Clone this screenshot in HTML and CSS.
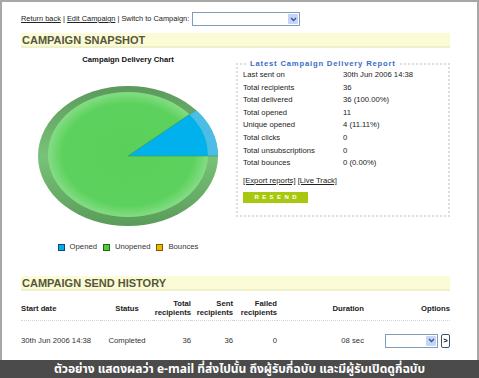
FILE: index.html
```html
<!DOCTYPE html>
<html lang="en">
<head>
    <meta charset="UTF-8">
    <meta name="viewport" content="width=device-width, initial-scale=1.0">
    <title>Campaign Snapshot</title>
    <link rel="stylesheet" href="styles.css">
</head>
<body>

    <div class="shot">
        <div class="page">
            <div class="topbar">
                <a href="#">Return back</a> | <a href="#">Edit Campaign</a> | Switch to Campaign:
                <span class="select select-wide"><span class="select-btn"><svg width="7" height="5" viewBox="0 0 7 5"><path d="M1 1 L3.5 3.5 L6 1" fill="none" stroke="#3d5586" stroke-width="1.4"/></svg></span></span>
            </div>

            <h2 class="section-head">CAMPAIGN SNAPSHOT</h2>
            <div class="snapshot">
                <div class="chart">
                    <div class="chart-title">Campaign Delivery Chart</div>
                    <svg width="214" height="176" viewBox="0 0 214 176">
                        <defs>
                            <linearGradient id="ring" x1="0" y1="0" x2="0" y2="1">
                                <stop offset="0" stop-color="#5c995c"/>
                                <stop offset="0.5" stop-color="#79c279"/>
                                <stop offset="1" stop-color="#5a9c5a"/>
                            </linearGradient>
                            <radialGradient id="face" cx="50%" cy="50%" r="50%">
                                <stop offset="0" stop-color="#5ad05a"/>
                                <stop offset="0.82" stop-color="#5dd15d"/>
                                <stop offset="1" stop-color="#84dd84"/>
                            </radialGradient>
                            <clipPath id="inner">
                                <ellipse cx="107" cy="89.5" rx="80" ry="62.5"/>
                            </clipPath>
                        </defs>
                        <ellipse cx="107" cy="91" rx="90" ry="70" fill="url(#ring)"/>
                        <path d="M107 91 L175 45 A90 70 0 0 1 197 91 Z" fill="#4bbde6"/>
                        <ellipse cx="107" cy="89.5" rx="80" ry="62.5" fill="url(#face)"/>
                        <path d="M107 91 L175 45 A90 70 0 0 1 197 91 Z" fill="#00b1ee" clip-path="url(#inner)"/>
                        <path d="M175 45 L107 91 L197 91" fill="none" stroke="#3f9b3f" stroke-width="0.6"/>
                    </svg>
                    <div class="legend">
                        <span class="legend-item"><i class="swatch opened"></i>Opened</span>
                        <span class="legend-item"><i class="swatch unopened"></i>Unopened</span>
                        <span class="legend-item"><i class="swatch bounces"></i>Bounces</span>
                    </div>
                </div>

                <fieldset class="report">
                    <legend>Latest Campaign Delivery Report</legend>
                    <table class="stats">
                        <tr><td>Last sent on</td><td>30th Jun 2006 14:38</td></tr>
                        <tr><td>Total recipients</td><td>36</td></tr>
                        <tr><td>Total delivered</td><td>36 (100.00%)</td></tr>
                        <tr><td>Total opened</td><td>11</td></tr>
                        <tr><td>Unique opened</td><td>4 (11.11%)</td></tr>
                        <tr><td>Total clicks</td><td>0</td></tr>
                        <tr><td>Total unsubscriptions</td><td>0</td></tr>
                        <tr><td>Total bounces</td><td>0 (0.00%)</td></tr>
                    </table>
                    <div class="report-links"><a href="#">[Export reports]</a> <a href="#">[Live Track]</a></div>
                    <button class="resend">RESEND</button>
                </fieldset>
            </div>

            <h2 class="section-head history-head">CAMPAIGN SEND HISTORY</h2>
            <table class="history">
                <colgroup>
                    <col style="width:80px"><col style="width:52px"><col style="width:38px"><col style="width:42px"><col style="width:44px"><col style="width:87px"><col style="width:86px">
                </colgroup>
                <thead>
                    <tr>
                        <th class="left">Start date</th>
                        <th class="mid">Status</th>
                        <th>Total<br>recipients</th>
                        <th>Sent<br>recipients</th>
                        <th>Failed<br>recipients</th>
                        <th>Duration</th>
                        <th>Options</th>
                    </tr>
                </thead>
                <tbody>
                    <tr>
                        <td class="left">30th Jun 2006 14:38</td>
                        <td class="mid">Completed</td>
                        <td>36</td>
                        <td>36</td>
                        <td>0</td>
                        <td>08 sec</td>
                        <td>
                            <div class="options">
                                <span class="select select-small"><span class="select-btn"><svg width="7" height="5" viewBox="0 0 7 5"><path d="M1 1 L3.5 3.5 L6 1" fill="none" stroke="#3d5586" stroke-width="1.4"/></svg></span></span>
                                <span class="go">&gt;</span>
                            </div>
                        </td>
                    </tr>
                </tbody>
            </table>
        </div>
        <div class="caption">ตัวอย่าง แสดงผลว่า e-mail ที่ส่งไปนั้น ถึงผู้รับกี่ฉบับ และมีผู้รับเปิดดูกี่ฉบับ</div>
    </div>

</body>
</html>
```

FILE: styles.css
```css
body { margin: 0; background: #fff; font-family: "Liberation Sans", Arial, sans-serif; font-size: 7.7px; color: #222; }
.shot { width: 479px; height: 378px; display: flex; flex-direction: column; }
.page { flex: 1; border: 2px solid #a7a7a7; border-bottom: 0; padding: 10px 27px 0 19px; }

/* top links */
.topbar { height: 14px; line-height: 14px; white-space: nowrap; font-size: 7.4px; }
.topbar a, .report-links a { color: #222; text-decoration: underline; }
.select { display: inline-flex; justify-content: flex-end; vertical-align: middle; box-sizing: border-box; height: 14px; padding: 1px; border: 1px solid #7f9db9; background: #fff; }
.select-wide { width: 108px; margin-left: 1px; }
.select-small { width: 53px; }
.select-btn { width: 10px; display: flex; align-items: center; justify-content: center; background: #c4d4fa; border-radius: 1px; }
.select-btn svg { display: block; }

.section-head { margin: 7px 0 0; height: 13px; line-height: 14px; padding-left: 1px; background: #fbfbd6; border-bottom: 2px solid #efefc9; font-size: 11px; font-weight: bold; color: #56563b; }
.history-head { margin-top: 24px; }

/* snapshot */
.snapshot { display: flex; align-items: flex-start; }
.chart { width: 214px; flex: none; text-align: center; }
.chart-title { margin-top: 7px; line-height: 10px; font-weight: bold; color: #111; }
.chart svg { display: block; }
.legend { display: flex; justify-content: center; gap: 6px; margin-top: 1px; line-height: 10px; color: #333; }
.legend-item { display: inline-flex; align-items: center; gap: 5px; }
.swatch { display: block; width: 5px; height: 5px; border: 1px solid; }
.swatch.opened { background: #0aa8ea; border-color: #05507a; }
.swatch.unopened { background: #4ccc3c; border-color: #22661c; }
.swatch.bounces { background: #f2b600; border-color: #7a5a00; }

.report { width: 214px; box-sizing: border-box; min-width: 0; margin: 11px 0 0 1px; padding: 0 5px 12px; border: 2px dotted #dedede; }
.report legend { margin-left: 5px; padding: 0 2px; line-height: 10px; font-weight: bold; color: #3b6cc8; letter-spacing: 0.8px; }
.stats { border-collapse: collapse; margin-top: 0; }
.stats td { padding: 0; height: 12.6px; line-height: 12.6px; }
.stats td:first-child { width: 100px; }
.report-links { margin-top: 6px; line-height: 10px; }
.resend { display: block; margin-top: 6px; width: 65px; height: 11px; padding: 0 0 0 3.4px; border: 0; background: #a7c80e; color: #fff; font-family: inherit; font-size: 6px; font-weight: bold; letter-spacing: 3.4px; line-height: 11px; }

/* history */
.history { width: 429px; table-layout: fixed; border-collapse: collapse; margin-top: 8px; color: #333; }
.history th, .history td { padding: 0; text-align: right; }
.history th { height: 18px; padding-bottom: 3px; line-height: 9px; font-weight: bold; color: #222; border-bottom: 1px dotted #d4d4d4; }
.history td { height: 39px; vertical-align: middle; }
.history .left { text-align: left; }
.history .mid { text-align: center; }
.options { display: flex; justify-content: flex-end; align-items: center; gap: 3px; }
.go { display: block; width: 9px; height: 14px; box-sizing: border-box; border: 1px solid #3e5275; border-radius: 2px; background: #fff; font-weight: bold; line-height: 12px; text-align: center; color: #111; }

.caption { height: 19px; background: #4b4b4b; color: #fff; font-family: "Noto Sans Thai", Tahoma, "DejaVu Sans", sans-serif; font-size: 12px; font-weight: bold; line-height: 19px; text-align: center; white-space: nowrap; overflow: hidden; }
```
